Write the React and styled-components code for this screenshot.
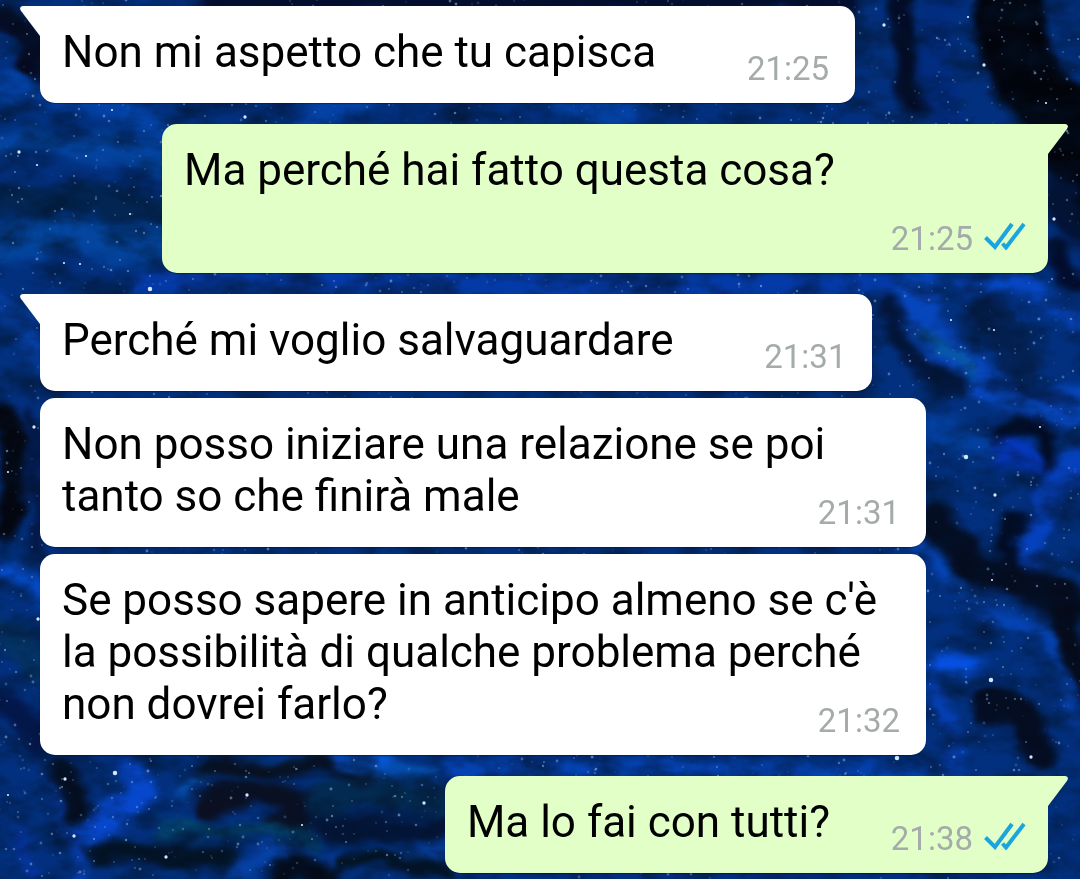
import React from "react";
import styled, { createGlobalStyle } from "styled-components";

const messages = [
  { id: 1, text: "Non mi aspetto che tu capisca", time: "21:25", first: true },
  {
    id: 2,
    text: "Ma perché hai fatto questa cosa?",
    time: "21:25",
    first: true,
    sent: true,
  },
  { id: 3, text: "Perché mi voglio salvaguardare", time: "21:31", first: true },
  {
    id: 4,
    text: "Non posso iniziare una relazione se poi tanto so che finirà male",
    time: "21:31",
  },
  {
    id: 5,
    text: "Se posso sapere in anticipo almeno se c'è la possibilità di qualche problema perché non dovrei farlo?",
    time: "21:32",
  },
  { id: 6, text: "Ma lo fai con tutti?", time: "21:38", first: true, sent: true },
];

// [path, color, stroke width]
const swirls = [
  ["M-20 95 Q60 70 150 130 T330 112 T620 116", "#0341a4", 30],
  ["M-20 150 Q60 130 165 165", "#03439f", 26],
  ["M-20 205 Q60 190 165 215", "#022552", 30],
  ["M-20 245 Q60 225 170 250", "#03459f", 34],
  ["M10 20 Q40 40 30 72", "#050a20", 28],
  ["M150 282 Q300 270 480 284 T900 280", "#043aa8", 24],
  ["M868 10 Q900 60 860 118", "#03307e", 26],
  ["M945 0 Q925 60 950 120", "#022c80", 30],
  ["M900 -10 Q905 60 915 110", "#030c26", 24],
  ["M1010 -10 Q1000 60 1060 118 L1100 200", "#02040c", 70],
  ["M1060 190 Q1055 220 1100 250", "#031338", 30],
  ["M1055 250 Q1060 285 1100 290", "#020c2c", 20],
  ["M915 275 Q915 340 980 380 T1100 400", "#0646bd", 34],
  ["M925 330 Q950 350 970 372", "#08609c", 8],
  ["M965 282 Q1040 280 1085 330", "#0647c4", 18],
  ["M890 310 Q900 360 955 385", "#03163d", 20],
  ["M985 315 Q1010 340 1020 360", "#032359", 40],
  ["M985 382 Q1030 388 1075 405", "#020c2c", 5],
  ["M990 440 Q1020 420 1040 430 T1045 480 T1015 520 T1010 560", "#02081d", 15],
  ["M1000 455 Q1020 445 1030 465", "#0437bc", 28],
  ["M1080 460 Q1030 500 1030 560", "#0541bd", 28],
  ["M930 420 Q955 440 985 450", "#033f9f", 28],
  ["M935 520 Q970 570 1010 580 T1080 610", "#040c20", 36],
  ["M920 545 Q955 600 990 612 T1040 625 T1075 720", "#0545b8", 14],
  ["M1060 595 Q1075 640 1080 680", "#050a18", 28],
  ["M930 670 Q950 662 980 664", "#0551e4", 18],
  ["M930 690 Q960 730 955 780", "#053fb4", 16],
  ["M990 705 Q1030 710 1040 750", "#040c20", 32],
  ["M-10 300 Q30 320 42 370", "#0542ac", 18],
  ["M-5 410 Q30 440 5 530", "#04060f", 26],
  ["M30 410 Q45 470 35 550", "#031748", 12],
  ["M-10 575 Q30 570 45 600", "#0449c4", 20],
  ["M-10 625 Q30 640 45 670", "#033264", 30],
  ["M-10 700 Q20 700 40 740", "#03174b", 28],
  ["M130 765 Q150 800 140 800 T90 835", "#0647cc", 28],
  ["M52 775 Q72 820 78 840 T75 885", "#0742bc", 12],
  ["M60 770 Q85 790 80 815", "#040d1d", 24],
  ["M180 790 Q230 750 310 762 T430 772", "#0654b8", 10],
  ["M205 770 Q270 755 370 778", "#070f1c", 16],
  ["M340 764 L385 764", "#0758dc", 16],
  ["M205 805 Q260 780 290 800 T280 828", "#0b0f20", 28],
  ["M160 830 Q240 832 310 838", "#03456f", 14],
  ["M320 800 Q380 790 450 800", "#032a50", 28],
  ["M330 825 Q380 840 450 825", "#031537", 26],
  ["M100 855 Q160 848 230 862", "#031325", 24],
  ["M235 885 Q265 840 300 855 T450 850", "#0642a8", 13],
  ["M275 878 Q300 850 330 878", "#030914", 22],
  ["M340 862 Q400 858 450 868", "#02101a", 14],
  ["M25 840 Q10 820 35 885", "#0534a4", 10],
  ["M450 768 Q600 758 760 770 T930 764", "#0444b8", 16],
];

const brightStars = [
  [19, 152, 3],
  [37, 165, 2],
  [86, 156, 2],
  [112, 110, 2],
  [150, 289, 4],
  [245, 117, 3],
  [130, 214, 2],
  [80, 264, 2],
  [64, 263, 2],
  [884, 25, 3],
  [984, 65, 3],
  [968, 17, 2],
  [945, 225, 2],
  [1054, 219, 3],
  [1046, 103, 2],
  [951, 320, 2],
  [966, 457, 4],
  [995, 495, 3],
  [992, 580, 2],
  [1040, 427, 2],
  [991, 680, 4],
  [1031, 757, 3],
  [897, 758, 4],
  [994, 330, 2],
  [115, 773, 4],
  [166, 857, 3],
  [247, 795, 3],
  [302, 825, 2],
  [424, 803, 3],
  [74, 836, 3],
  [8, 795, 2],
  [65, 779, 3],
  [34, 427, 3],
  [8, 472, 2],
  [38, 619, 3],
];

// same sky on every render
const makeStars = (count) => {
  let seed = 7;
  const rand = () => {
    seed = (seed * 16807) % 2147483647;
    return seed / 2147483647;
  };
  return Array.from({ length: count }, () => ({
    x: Math.round(rand() * 1080),
    y: Math.round(rand() * 879),
    r: 0.6 + rand() * 0.9,
    o: 0.1 + rand() * 0.5,
  }));
};

const stars = makeStars(3600);

const Wallpaper = () => (
  <Sky viewBox="0 0 1080 879" preserveAspectRatio="xMidYMid slice" aria-hidden="true">
    <defs>
      <filter id="paint" x="-5%" y="-5%" width="110%" height="110%" colorInterpolationFilters="sRGB">
        <feGaussianBlur stdDeviation="4" result="soft" />
        <feTurbulence type="fractalNoise" baseFrequency="0.02 0.028" numOctaves="3" seed="4" result="noise" />
        <feDisplacementMap in="soft" in2="noise" scale="26" xChannelSelector="R" yChannelSelector="G" />
      </filter>
      <filter id="grain" x="0" y="0" width="100%" height="100%" colorInterpolationFilters="sRGB">
        <feTurbulence type="fractalNoise" baseFrequency="0.025 0.04" numOctaves="4" seed="11" />
        <feColorMatrix values="0 0 0 0 0.01  0 0 0 0 0.07  0 0 0 0 0.16  1.3 0 0 0 -0.48" />
      </filter>
      <filter id="starBlur">
        <feGaussianBlur stdDeviation="0.5" />
      </filter>
    </defs>
    <rect width="1080" height="879" fill="#022f80" />
    <g filter="url(#paint)" fill="none" strokeLinecap="round">
      <rect x="-60" y="-60" width="1200" height="1000" fill="#02307f" />
      <rect x="200" y="-60" width="660" height="75" fill="#020d30" />
      {swirls.map(([d, color, width]) => (
        <path key={d} d={d} stroke={color} strokeWidth={width} />
      ))}
    </g>
    <rect width="1080" height="879" filter="url(#grain)" />
    <g fill="#8fb4e0" filter="url(#starBlur)">
      {stars.map((s, i) => (
        <circle key={i} cx={s.x} cy={s.y} r={s.r} opacity={s.o} />
      ))}
      {brightStars.map(([x, y, r]) => (
        <circle key={`${x}-${y}`} cx={x} cy={y} r={r / 1.8} fill="#d3e8ff" />
      ))}
    </g>
  </Sky>
);

const Tail = ({ sent }) => (
  <TailIcon $sent={sent} viewBox="0 0 22 32" aria-hidden="true">
    <path d="M22 0H3C0.4 0 -0.8 2.4 0.9 4.7L20 30H22Z" fill="currentColor" />
  </TailIcon>
);

const Ticks = () => (
  <TickIcon viewBox="0 0 42 28" role="img" aria-label="Letto">
    <path d="M1.5 15.5L11 25L28 2M18.5 21.5L22 25.5L40 2" />
  </TickIcon>
);

const App = () => {
  return (
    <>
      <GlobalStyle />
      <Wallpaper />
      <Chat>
        {messages.map((m) => (
          <Bubble key={m.id} $sent={m.sent} $first={m.first}>
            {m.first && <Tail sent={m.sent} />}
            <Text $sent={m.sent}>{m.text}</Text>
            <Meta $sent={m.sent}>
              <time>{m.time}</time>
              {m.sent && <Ticks />}
            </Meta>
          </Bubble>
        ))}
      </Chat>
    </>
  );
};

export default App;

const GlobalStyle = createGlobalStyle`
  * {
    box-sizing: border-box;
  }

  body {
    margin: 0;
    background: #022f80;
    font-family: Roboto, "Liberation Sans", sans-serif;
  }
`;

const Sky = styled.svg`
  position: fixed;
  z-index: -1;
  inset: 0;
  width: 100%;
  height: 100%;
`;

const Chat = styled.main`
  display: flex;
  flex-direction: column;
  padding: 6px 32px 6px 40px;
`;

const Bubble = styled.article`
  position: relative;
  display: grid;
  align-self: ${({ $sent }) => ($sent ? "flex-end" : "flex-start")};
  max-width: 886px;
  margin-top: ${({ $first }) => ($first ? "21px" : "7px")};
  border-radius: 15px;
  ${({ $first, $sent }) =>
    $first && ($sent ? "border-top-right-radius: 0;" : "border-top-left-radius: 0;")}
  color: ${({ $sent }) => ($sent ? "#e1ffc7" : "#fff")};
  background: currentColor;
  box-shadow: 0 1px 1px rgba(0, 10, 40, 0.4);

  &:first-child {
    margin-top: 0;
  }
`;

const TailIcon = styled.svg`
  position: absolute;
  top: 0;
  ${({ $sent }) => ($sent ? "right: -20px; transform: scaleX(-1);" : "left: -20px;")}
  width: 22px;
  height: 32px;
`;

const Text = styled.p`
  grid-area: 1 / 1;
  margin: 0;
  padding: 20px 22px 25px;
  color: #000;
  font-size: 44px;
  line-height: 52px;

  /* keeps room for the time on the last line */
  &::after {
    content: "";
    display: inline-block;
    width: ${({ $sent }) => ($sent ? "196px" : "177px")};
  }
`;

const Meta = styled.div`
  grid-area: 1 / 1;
  display: flex;
  align-items: flex-start;
  align-self: end;
  justify-self: end;
  gap: 11px;
  padding: 0 ${({ $sent }) => ($sent ? "22px" : "26px")} 17px 0;
  color: #a5abab;
  font-size: 33px;
  line-height: 34px;
`;

const TickIcon = styled.svg`
  width: 42px;
  height: 28px;
  fill: none;
  stroke: #1aa5dd;
  stroke-width: 4;
`;
